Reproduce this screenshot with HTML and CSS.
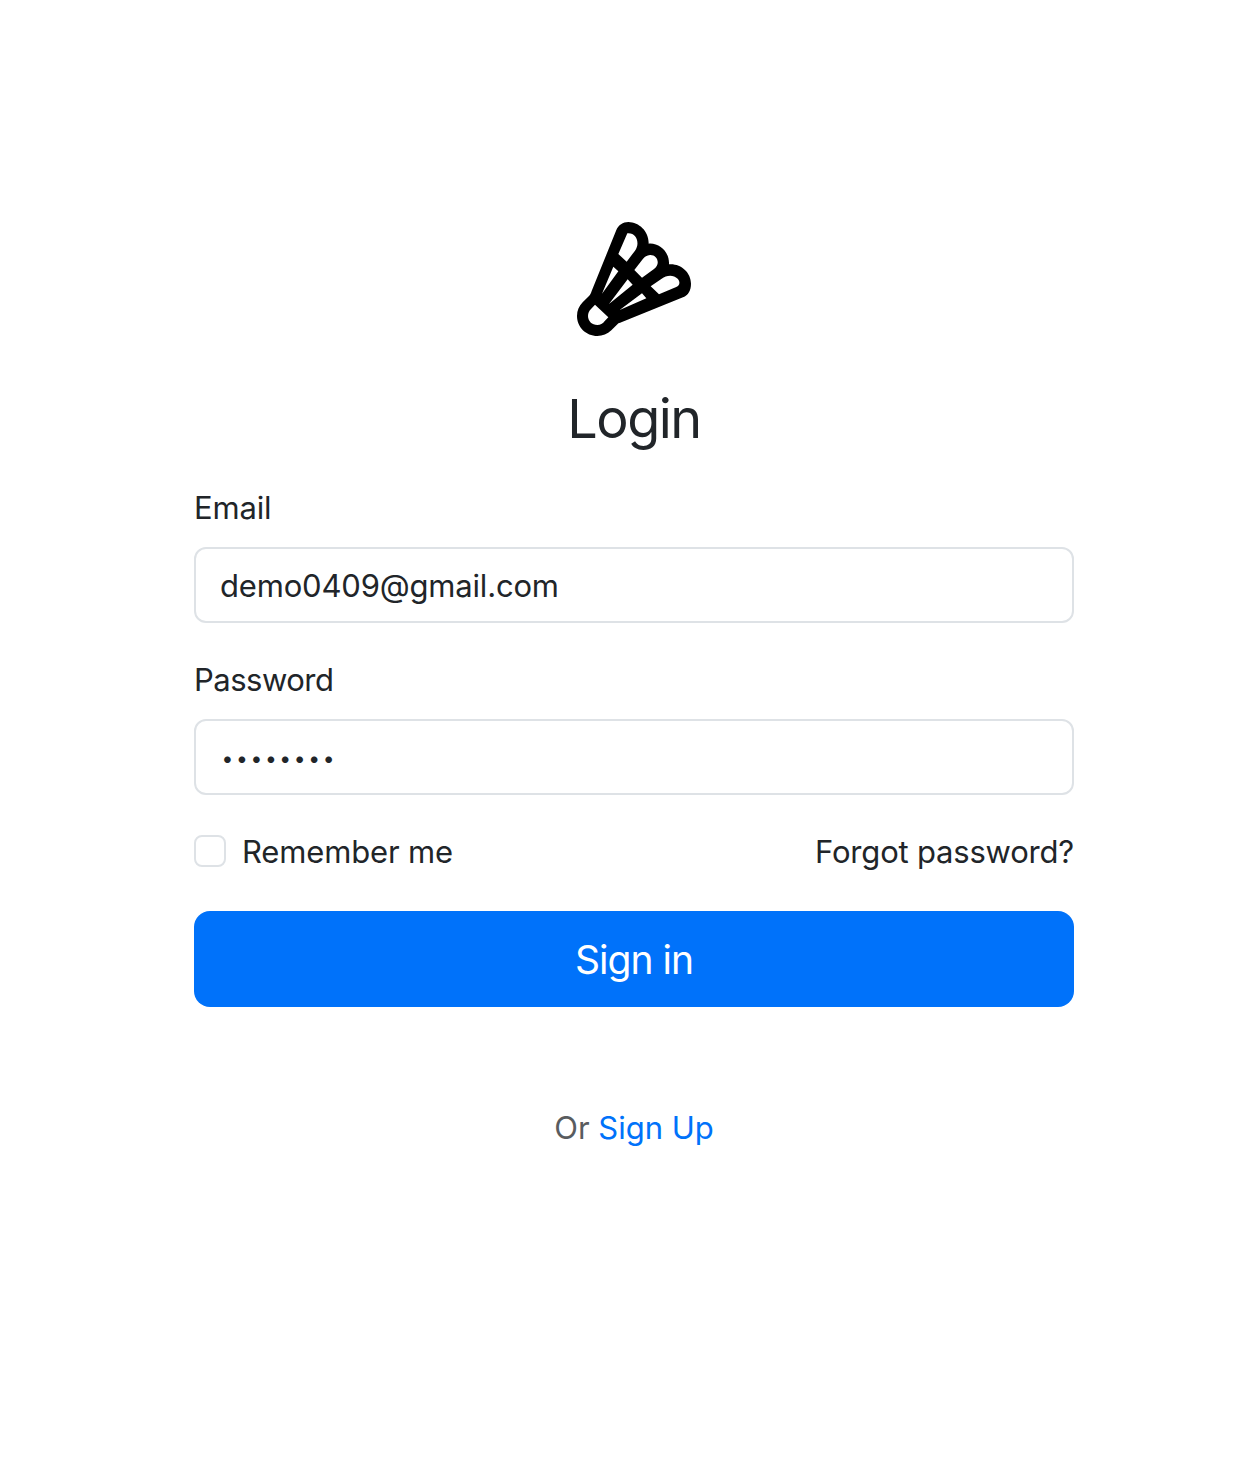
FILE: index.html
```html
<!DOCTYPE html>
<html lang="en">
<head>
<meta charset="utf-8">
<title>Login</title>
<link rel="stylesheet" href="styles.css">
</head>
<body>
<main class="login">
  <svg class="logo" viewBox="0 0 420 420" aria-hidden="true">
    <path fill-rule="evenodd" d="M157 60C163 45 177 36 193 36C226 37 255 64 254 101C286 98 317 126 315 163C350 160 381 187 381 221C381 242 373 255 357 262L172 337C167 339 164 339 161 342L142 361C130 372 116 378 100 378C66 378 39 351 39 318C39 302 45 288 56 277L75 258C79 254 81 249 83 243ZM190 70L163 132L188 155L213 122C229 101 218 67 190 70ZM211 180L234 203L270 177C291 162 280 134 258 135C249 136 242 140 236 148ZM260 229L285 253L335 232C347 228 350 216 341 206C328 193 307 195 293 206ZM148 170L163 184L114 251ZM191 208L206 224L135 282ZM234 250L247 265L167 300ZM93 284L133 322L123 332C116 341 109 345 100 345C84 345 72 333 72 318C72 310 75 303 81 297Z"/>
  </svg>
  <h1 class="title">Login</h1>
  <form class="form">
    <label class="label" for="email">Email</label>
    <input class="field" id="email" type="text" value="demo0409@gmail.com">
    <label class="label label-password" for="password">Password</label>
    <input class="field field-password" id="password" type="text" value="••••••••">
    <div class="options">
      <label class="remember"><input class="check" type="checkbox"><span>Remember me</span></label>
      <a class="forgot">Forgot password?</a>
    </div>
    <button class="submit" type="button">Sign in</button>
  </form>
  <p class="alternate">Or <a class="signup">Sign Up</a></p>
</main>
</body>
</html>
```
FILE: styles.css
```css
* { box-sizing: border-box; }
body {
  margin: 0;
  background: #fff;
  color: #212529;
  font: 400 31px/48px Inter, "Liberation Sans", sans-serif;
  letter-spacing: -0.15px;
}
.login {
  width: 1258px;
  min-height: 1458px;
  padding: 210px 184px 0 194px;
  display: flex;
  flex-direction: column;
  align-items: center;
}
.logo { width: 140px; height: 140px; display: block; }
.title {
  margin: 35px 0 32px;
  font-size: 54px;
  line-height: 67px;
  font-weight: 400;
  letter-spacing: -1.5px;
}
.form { width: 100%; display: flex; flex-direction: column; }
.label { height: 48px; margin-bottom: 15px; }
.label-password { letter-spacing: -0.5px; }
.field {
  width: 100%;
  height: 76px;
  margin: 0 0 33px;
  padding: 0 24px;
  border: 2px solid #dee2e6;
  border-radius: 12px;
  background: #fff;
  color: inherit;
  font: inherit;
  letter-spacing: -0.18px;
  outline: 0;
}
.field-password { padding: 2px 24px 0 25.5px; font-size: 21px; letter-spacing: 2.65px; }
.options { display: flex; justify-content: space-between; height: 48px; }
.remember { display: flex; gap: 16px; }
.check {
  appearance: none;
  width: 32px;
  height: 32px;
  margin: 7px 0 0;
  border: 2px solid #dee2e6;
  border-radius: 8px;
}
.submit {
  height: 96px;
  margin: 35px 0 0;
  padding: 2px 0 0;
  border: 0;
  border-radius: 16px;
  background: #0072fa;
  color: #fff;
  font: inherit;
  font-size: 39px;
  letter-spacing: -0.95px;
}
.forgot { letter-spacing: -0.2px; }
.alternate { margin: 97px 0 0; color: #595c5f; letter-spacing: 0; }
.signup { color: #0072fa; }
```
